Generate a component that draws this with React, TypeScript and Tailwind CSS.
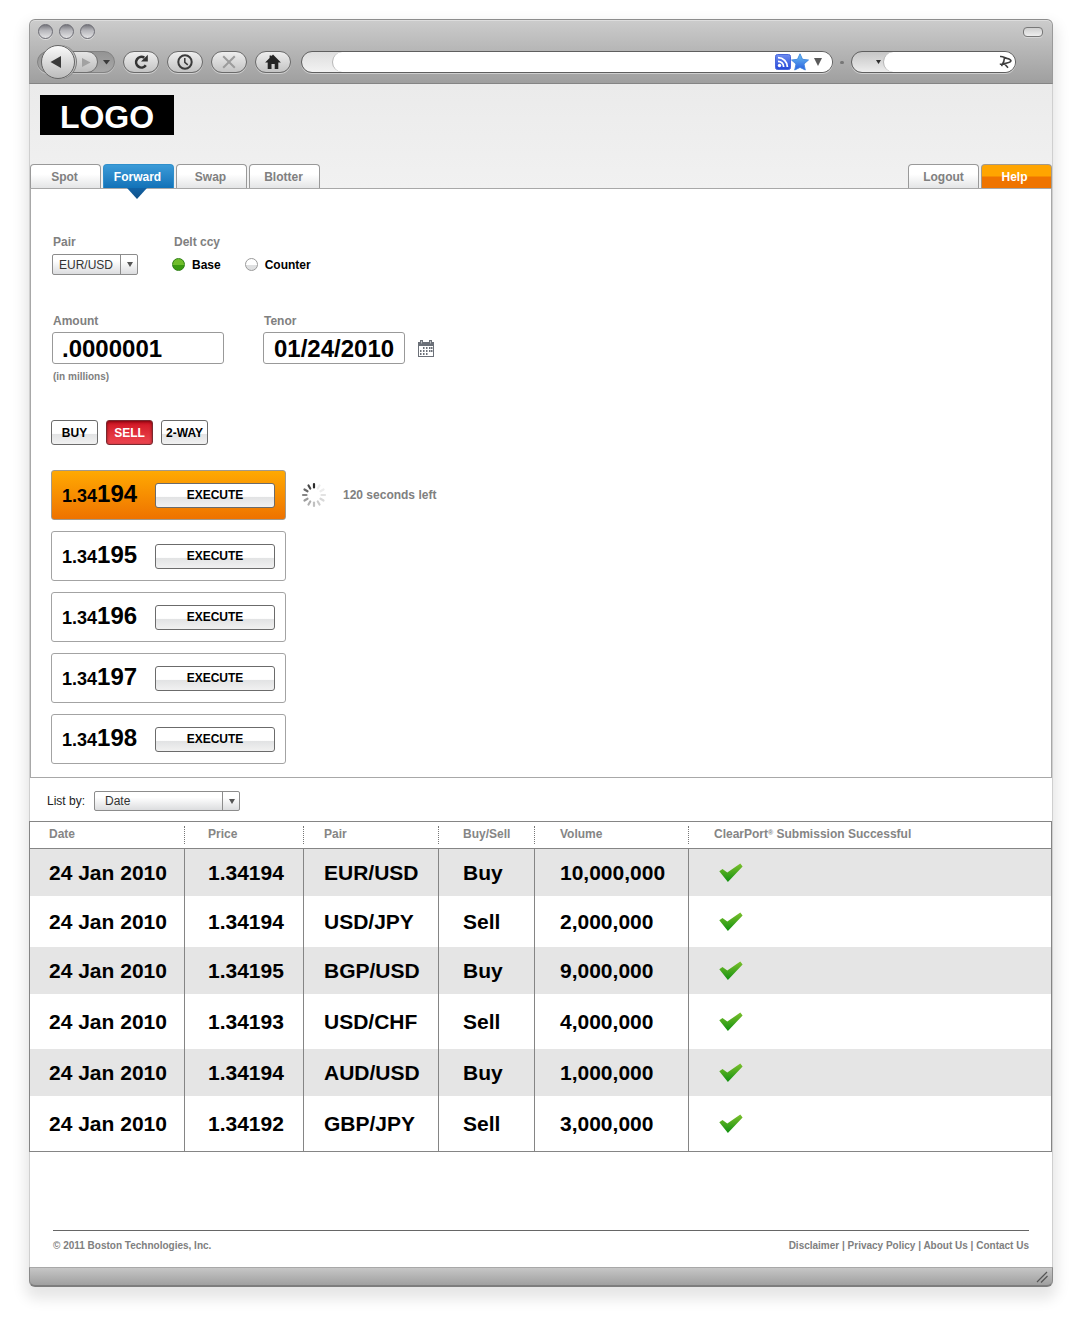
import React, { useState } from "react";

const PILL =
  "flex h-[22px] w-9 shrink-0 items-center justify-center rounded-full border border-[#6a6a6a] bg-linear-to-b from-[#eeeeee] to-[#c4c4c4] shadow-[0_1px_0_#cfcfcf]";

const GLOSS =
  "border-[#6b6b6b] bg-[linear-gradient(#ffffff_0%,#ffffff_54%,#e2e3e4_58%,#f1f1f1_100%)] text-black";

function TrafficLight({ label }: { label: string }) {
  return (
    <button
      aria-label={label}
      className="size-[15px] rounded-full border border-[#6c6c74] bg-[linear-gradient(#77777d_0%,#b4b4b9_40%,#e4e4e6_100%)] shadow-[0_1px_0_#dedede]"
    />
  );
}

function BrowserBar() {
  return (
    <header className="rounded-t-md border border-b-[#858585] border-x-[#9a9a9a] border-t-[#8d8d8d] bg-linear-to-b from-[#cccccc] to-[#9f9f9f] shadow-[inset_0_1px_0_#dddddd]">
      <div className="flex justify-between pt-1 pr-[9px] pl-2">
        <div className="flex gap-1.5">
          <TrafficLight label="Close" />
          <TrafficLight label="Minimize" />
          <TrafficLight label="Zoom" />
        </div>
        <button
          aria-label="Toggle toolbar"
          className="mt-[3px] h-2.5 w-5 rounded-sm border border-[#777777] bg-linear-to-b from-[#cfcfcf] to-[#eeeeee] shadow-[0_1px_0_#d6d6d6]"
        />
      </div>
      <div className="mt-1.5 flex items-center pr-9 pb-1 pl-[7px]">
        <div className="relative flex h-[34px] w-[78px] shrink-0 items-center">
          <span className="absolute inset-x-0 top-1.5 h-[22px] rounded-full border border-[#828282] bg-linear-to-b from-[#949494] to-[#a8a8a8] shadow-[0_1px_0_#c4c4c4]" />
          <button
            aria-label="Back"
            className="relative z-10 ml-1 flex size-[34px] shrink-0 items-center justify-center rounded-full border border-[#666666] bg-linear-to-b from-[#fafafa] to-[#bcbcbc] shadow-[1px_0_0_#c9c9c9,2px_0_0_#7c7c7c]"
          >
            <svg viewBox="0 0 12 12" className="mr-1 size-3 fill-[#3a3a3a]">
              <path d="M11 0V12L0.5 6Z" />
            </svg>
          </button>
          <button
            aria-label="Forward"
            className="relative -ml-1.5 flex h-[22px] w-[29px] shrink-0 items-center justify-end rounded-r-full border border-[#6f6f6f] bg-linear-to-b from-[#e6e6e6] to-[#bdbdbd] pr-1.5"
          >
            <svg viewBox="0 0 10 10" className="size-[9px] fill-[#a2a2a2]">
              <path d="M0 0V10L9.500 5Z" />
            </svg>
          </button>
          <button aria-label="History list" className="relative flex flex-1 justify-center">
            <svg viewBox="0 0 7 5" className="h-[5px] w-[7px] fill-[#3a3a3a]">
              <path d="M0 0H7L3.500 4.500Z" />
            </svg>
          </button>
        </div>
        <div className="ml-2 flex shrink-0 gap-2">
          <button aria-label="Reload" className={PILL}>
            <svg viewBox="0 0 16 16" className="size-4 fill-none stroke-[#333333] stroke-[2.600]">
              <path d="M12.800 11.200A5.300 5.300 0 1 1 11.300 3.700" />
              <path d="M14.800 0.800V7.600H8Z" className="fill-[#333333] stroke-none" />
            </svg>
          </button>
          <button aria-label="History" className={PILL}>
            <svg viewBox="0 0 16 16" className="size-4 fill-none stroke-[#3a3a3a] stroke-2">
              <circle cx="8" cy="8" r="6.700" />
              <path d="M7.800 4V8.300L10.800 10.800" className="stroke-[1.5]" />
            </svg>
          </button>
          <button aria-label="Stop" className={PILL}>
            <svg viewBox="0 0 16 16" className="size-4 fill-none stroke-[#9c9c9c] stroke-2">
              <path d="M2.200 2.200L13.800 13.800M13.800 2.200L2.200 13.800" />
            </svg>
          </button>
          <button aria-label="Home" className={PILL}>
            <svg viewBox="0 0 16 16" className="size-4 fill-[#252525]">
              <path d="M8 0.500L15.900 8.600H13.300V15H9.700V10H6.500V15H2.700V8.600H0.100L4.600 4V1.500H6.400V2.200Z" />
            </svg>
          </button>
        </div>
        <div className="ml-2.5 flex h-[22px] min-w-0 flex-1 items-center overflow-hidden rounded-full border border-[#5f5f5f] bg-linear-to-b from-[#dedede] to-[#f2f2f2] pl-[30px] shadow-[0_1px_0_#cfcfcf]">
          <div className="flex h-full min-w-0 flex-1 items-center rounded-l-full border-l border-[#b5b5b5] bg-white pr-2.5">
            <input aria-label="Address" className="min-w-0 flex-1 px-3 text-xs outline-none" />
            <svg viewBox="0 0 16 16" className="size-4 shrink-0">
              <defs>
                <linearGradient id="feed" x1="0" y1="0" x2="0" y2="1">
                  <stop offset="0" stopColor="#6f8df0" />
                  <stop offset="1" stopColor="#2547d8" />
                </linearGradient>
              </defs>
              <rect x="0.500" y="0.500" width="15" height="15" rx="2" fill="url(#feed)" stroke="#4a68dc" />
              <circle cx="4.500" cy="11.500" r="1.700" fill="#fff" />
              <path d="M3 7.300A5.700 5.700 0 0 1 8.700 13M3 3.600A9.400 9.400 0 0 1 12.400 13" fill="none" stroke="#fff" strokeWidth="1.800" />
            </svg>
            <svg viewBox="0 0 18 18" className="size-[18px] shrink-0">
              <defs>
                <linearGradient id="star" x1="0" y1="0" x2="0" y2="1">
                  <stop offset="0" stopColor="#6cc3f2" />
                  <stop offset="1" stopColor="#2a5fe0" />
                </linearGradient>
              </defs>
              <path
                d="M9 0.800L11.500 6.300L17.500 7L13 11L14.300 17L9 14.400L3.700 17L5 11L0.500 7L6.500 6.300Z"
                fill="url(#star)"
                stroke="#3f86dc"
                strokeWidth="0.900"
                strokeLinejoin="round"
              />
            </svg>
            <svg viewBox="0 0 8 8" className="ml-[5px] size-2 shrink-0 fill-[#5a5a5a]">
              <path d="M0 0H8L4 8Z" />
            </svg>
          </div>
        </div>
        <span className="mx-[7px] h-[3px] w-1 shrink-0 rounded-full bg-[#777777]" />
        <div className="flex h-[22px] w-[165px] shrink-0 items-center overflow-hidden rounded-full border border-[#5f5f5f] bg-linear-to-b from-[#c6c6c6] to-[#ededed] shadow-[0_1px_0_#cfcfcf]">
          <button aria-label="Search engine" className="flex w-[31px] shrink-0 justify-end pr-0.5">
            <svg viewBox="0 0 5 4" className="h-1 w-[5px] fill-[#2f2f2f]">
              <path d="M0 0H5L2.500 4Z" />
            </svg>
          </button>
          <div className="flex h-full min-w-0 flex-1 items-center rounded-l-full border-l border-[#b5b5b5] bg-white pr-[3px]">
            <input aria-label="Search" className="min-w-0 flex-1 px-3 text-xs outline-none" />
            <svg viewBox="0 0 13 14" className="h-3.5 w-[13px] shrink-0 fill-none stroke-[#3f3f3f] stroke-[1.600]">
              <path d="M1 1.500C4 1 5.500 2.800 8 3.400C11 4 12.800 5.400 11.500 6.600C9.500 8.300 5 8.800 0.800 9.300M5.500 2.500C5.500 6 4.500 8 2.500 11.200M5 8.300L9 12.800" />
            </svg>
          </div>
        </div>
      </div>
    </header>
  );
}

const TAB =
  "flex h-6 w-[71px] items-center justify-center rounded-t border border-b-0 text-xs font-bold";

function Tab({ label, active, onSelect }: { label: string; active?: boolean; onSelect?: () => void }) {
  return (
    <button
      role="tab"
      aria-selected={!!active}
      onClick={onSelect}
      className={
        active
          ? `${TAB} relative border-[#2f8fcb] bg-linear-to-b from-[#3b9bd8] to-[#1172b8] pr-0.5 text-white`
          : `${TAB} border-[#999999] bg-linear-to-b from-white from-40% to-[#e4e5e6] pr-0.5 text-[#808080]`
      }
    >
      {label}
      {active && (
        <svg viewBox="0 0 20 11" className="absolute top-[23px] left-[23px] h-[11px] w-5">
          <defs>
            <linearGradient id="pointer" x1="0" y1="0" x2="0" y2="1">
              <stop offset="0" stopColor="#1263a6" />
              <stop offset="1" stopColor="#0f4f86" />
            </linearGradient>
          </defs>
          <path d="M0 0H20L10 11Z" fill="url(#pointer)" />
        </svg>
      )}
    </button>
  );
}

function Dropdown({ id, options, size, pad }: { id: string; options: string[]; size: string; pad: string }) {
  return (
    <div className={`relative ${size}`}>
      <select
        id={id}
        className={`block size-full appearance-none rounded-xs border border-[#8c8c8c] bg-linear-to-b from-white from-30% to-[#dcdddf] text-xs text-[#333333] ${pad}`}
      >
        {options.map((o) => (
          <option key={o}>{o}</option>
        ))}
      </select>
      <span className="pointer-events-none absolute inset-y-0 right-0 flex w-[18px] items-center justify-center border-l border-[#8c8c8c]">
        <svg viewBox="0 0 6 5" className="h-[5px] w-1.5 fill-[#555555]">
          <path d="M0 0H6L3 5Z" />
        </svg>
      </span>
    </div>
  );
}

function Radio({ label, checked, onChange }: { label: string; checked: boolean; onChange: () => void }) {
  return (
    <label className="flex items-center gap-[7px] text-xs font-bold text-black">
      <input
        type="radio"
        name="delt"
        checked={checked}
        onChange={onChange}
        className="size-[13px] appearance-none rounded-full border border-[#9a9a9a] bg-[linear-gradient(#ffffff_50%,#dfe0e1_54%)] checked:border-[#2c7f12] checked:bg-[linear-gradient(#6fbd2a_50%,#3a9a10_54%)]"
      />
      {label}
    </label>
  );
}

function CalendarIcon() {
  return (
    <svg viewBox="0 0 16 17" className="h-[17px] w-4">
      <path
        fillRule="evenodd"
        fill="#6b7078"
        d="M0 2H2V0H5V2H11V0H14V2H16V17H0ZM1 6V16H15V6Z"
      />
      <path d="M3.500 1V3.500M12.500 1V3.500" stroke="#b9bcc0" strokeWidth="1" />
      <g fill="#6b7078">
        {[5, 8, 11, 13].map((x) => (
          <rect key={x} x={x} y="7" width="1.500" height="2" />
        ))}
        {[2, 5, 8, 11, 13].map((x) => (
          <rect key={x} x={x} y="10" width="1.500" height="2" />
        ))}
        {[2, 5, 8].map((x) => (
          <rect key={x} x={x} y="13" width="1.500" height="2" />
        ))}
      </g>
    </svg>
  );
}

const SPOKES = ["#ececec", "#ececec", "#e2e2e2", "#d8d8d8", "#cbcbcb", "#c0c0c0", "#b0b0b0", "#9c9c9c", "#868686", "#6a6a6a", "#474747", "#2a2a2a"];

function Spinner() {
  return (
    <svg viewBox="0 0 26 26" className="size-[26px]" role="img" aria-label="Waiting">
      {SPOKES.map((color, i) => (
        <line
          key={i}
          x1="13"
          y1="5.500"
          x2="13"
          y2="2"
          stroke={color}
          strokeWidth="2.200"
          strokeLinecap="round"
          transform={`rotate(${(i + 1) * 30} 13 13)`}
        />
      ))}
    </svg>
  );
}

function Quote({ pips, active }: { pips: string; active?: boolean }) {
  return (
    <div
      className={
        active
          ? "flex h-[50px] w-[235px] items-center justify-between rounded-[3px] border border-[#a39a8c] bg-linear-to-b from-[#ffa902] to-[#ee7200] px-2.5"
          : "flex h-[50px] w-[235px] items-center justify-between rounded-[3px] border border-[#a3a3a3] bg-white px-2.5"
      }
    >
      <span className="text-lg leading-8 font-bold text-black">
        1.34<span className="text-2xl leading-8">{pips}</span>
      </span>
      <button className={`h-[25px] w-[120px] rounded-[3px] border text-xs font-bold ${GLOSS}`}>EXECUTE</button>
    </div>
  );
}

function Check() {
  return (
    <svg viewBox="0 0 24 20" className="ml-[5px] h-5 w-6" role="img" aria-label="Successful">
      <defs>
        <linearGradient id="check" x1="0" y1="0" x2="0" y2="1">
          <stop offset="0" stopColor="#7cc02c" />
          <stop offset="1" stopColor="#109010" />
        </linearGradient>
      </defs>
      <path d="M0.300 8.300L3.500 6L8.300 9.600L21.300 0.600L23.600 3.500L8.900 19Z" fill="url(#check)" />
    </svg>
  );
}

const COLUMNS = [
  { name: "Date", width: "w-[155px]", pad: "pl-[19px]" },
  { name: "Price", width: "w-[119px]", pad: "pl-[23px]" },
  { name: "Pair", width: "w-[135px]", pad: "pl-5" },
  { name: "Buy/Sell", width: "w-24", pad: "pl-6" },
  { name: "Volume", width: "w-[154px]", pad: "pl-[25px]" },
];

const TRADES = [
  ["24 Jan 2010", "1.34194", "EUR/USD", "Buy", "10,000,000"],
  ["24 Jan 2010", "1.34194", "USD/JPY", "Sell", "2,000,000"],
  ["24 Jan 2010", "1.34195", "BGP/USD", "Buy", "9,000,000"],
  ["24 Jan 2010", "1.34193", "USD/CHF", "Sell", "4,000,000"],
  ["24 Jan 2010", "1.34194", "AUD/USD", "Buy", "1,000,000"],
  ["24 Jan 2010", "1.34192", "GBP/JPY", "Sell", "3,000,000"],
];

const ROW_STYLES = [
  "h-[47px] bg-[#e5e5e5]",
  "h-[51px] bg-white",
  "h-[47px] bg-[#e5e5e5]",
  "h-[55px] bg-white",
  "h-[47px] bg-[#e5e5e5]",
  "h-[55px] bg-white",
];

function Blotter() {
  return (
    <div className="-ml-px border border-[#858585]">
      <table className="w-full table-fixed border-separate border-spacing-0 text-left">
        <thead>
          <tr className="h-[27px] text-xs text-[#858585]">
            {COLUMNS.map((c) => (
              <th key={c.name} className={`border-b border-[#858585] p-0 ${c.width}`}>
                <div className={`h-[18px] border-r border-dotted border-[#777777] leading-4 ${c.pad}`}>{c.name}</div>
              </th>
            ))}
            <th className="border-b border-[#858585] p-0">
              <div className="h-[18px] pl-[25px] leading-4">
                ClearPort<sup className="text-[7px]">®</sup> Submission Successful
              </div>
            </th>
          </tr>
        </thead>
        <tbody className="text-[21px] leading-6 font-bold text-black">
          {TRADES.map((row, i) => (
            <tr key={i} className={ROW_STYLES[i]}>
              {row.map((cell, j) => (
                <td key={j} className={`border-r border-[#858585] py-0 pr-0 ${COLUMNS[j].pad}`}>
                  {cell}
                </td>
              ))}
              <td className="py-0 pr-0 pl-[25px]">
                <Check />
              </td>
            </tr>
          ))}
        </tbody>
      </table>
    </div>
  );
}

const LABEL = "block pl-px text-xs leading-4 font-bold text-[#808080]";
const FIELD = "h-8 rounded-[3px] border border-[#999999] bg-white pt-0.5 text-2xl font-bold text-black outline-none";
const SIDE = "h-[25px] w-[47px] rounded-[3px] border text-xs font-bold";

export default function App() {
  const [tab, setTab] = useState("Forward");
  const [delt, setDelt] = useState("Base");
  const [side, setSide] = useState("SELL");
  return (
    <div className="bg-white pt-[19px] pr-[22px] pb-[54px] pl-[29px] font-['Liberation_Sans',Arial,sans-serif]">
      <div className="rounded-t-md rounded-b-lg shadow-[0_8px_14px_4px_rgba(0,0,0,0.1)]">
        <BrowserBar />
        <main className="border-x border-[#cfcfcf] bg-white">
          <div className="bg-linear-to-b from-[#ebebeb] to-[#f1f1f1] pt-[11px]">
            <h1 className="ml-2.5 flex h-10 w-[134px] items-center justify-center bg-black pt-1 text-[32px] font-bold text-white">
              LOGO
            </h1>
            <div className="mt-[29px] flex justify-between">
              <div role="tablist" className="flex gap-0.5">
                {["Spot", "Forward", "Swap", "Blotter"].map((t) => (
                  <Tab key={t} label={t} active={tab === t} onSelect={() => setTab(t)} />
                ))}
              </div>
              <div className="flex gap-0.5">
                <button className={`${TAB} border-[#999999] bg-linear-to-b from-white from-40% to-[#e4e5e6] text-[#808080]`}>
                  Logout
                </button>
                <button className={`${TAB} border-[#a39a8c] bg-[linear-gradient(#ffa500_48%,#ef7400_52%)] pr-1 text-white`}>
                  Help
                </button>
              </div>
            </div>
          </div>

          <section className="border border-[#a8a8a8] bg-white pt-[45px] pb-[13px] pl-5">
            <div className="ml-px flex">
              <div className="w-[120px]">
                <label htmlFor="pair" className={LABEL}>Pair</label>
                <div className="mt-1">
                  <Dropdown id="pair" options={["EUR/USD", "USD/JPY", "AUD/USD"]} size="h-[21px] w-[86px]" pad="pl-1.5" />
                </div>
              </div>
              <fieldset>
                <legend className={`${LABEL} ml-px`}>Delt ccy</legend>
                <div className="mt-1 flex h-[21px] items-center gap-6">
                  <Radio label="Base" checked={delt === "Base"} onChange={() => setDelt("Base")} />
                  <Radio label="Counter" checked={delt === "Counter"} onChange={() => setDelt("Counter")} />
                </div>
              </fieldset>
            </div>

            <div className="mt-[38px] ml-px flex">
              <div className="w-[211px]">
                <label htmlFor="amount" className={LABEL}>Amount</label>
                <input id="amount" defaultValue=".0000001" className={`${FIELD} mt-[3px] block w-[172px] px-[9px]`} />
                <p className="mt-[5px] pl-px text-[10px] leading-4 font-bold text-[#808080]">(in millions)</p>
              </div>
              <div>
                <label htmlFor="tenor" className={LABEL}>Tenor</label>
                <div className="mt-[3px] flex items-center gap-[13px]">
                  <input id="tenor" defaultValue="01/24/2010" className={`${FIELD} w-[142px] px-2.5`} />
                  <button aria-label="Pick a date"><CalendarIcon /></button>
                </div>
              </div>
            </div>

            <div className="mt-[35px] flex gap-2">
              {["BUY", "SELL", "2-WAY"].map((s) => (
                <button
                  key={s}
                  onClick={() => setSide(s)}
                  className={
                    side === s
                      ? `${SIDE} border-[#7a2a30] bg-linear-to-b from-[#cf0d20] to-[#ee4550] text-white shadow-[inset_0_1px_3px_rgba(60,0,0,0.6)]`
                      : `${SIDE} ${GLOSS}`
                  }
                >
                  {s}
                </button>
              ))}
            </div>

            <div className="mt-[25px] flex flex-col gap-[11px]">
              <div className="flex items-center">
                <Quote pips="194" active />
                <div className="ml-[15px] flex items-center gap-4 text-xs font-bold text-[#808080]">
                  <Spinner />
                  120 seconds left
                </div>
              </div>
              <Quote pips="195" />
              <Quote pips="196" />
              <Quote pips="197" />
              <Quote pips="198" />
            </div>
          </section>

          <div className="flex items-center gap-[9px] pt-[13px] pb-2.5 pl-[17px]">
            <label htmlFor="listby" className="text-xs text-[#222222]">List by:</label>
            <Dropdown id="listby" options={["Date", "Price", "Pair", "Volume"]} size="h-5 w-[146px]" pad="pl-2.5" />
          </div>
          <Blotter />

          <footer className="mx-[23px] mt-[78px] flex justify-between border-t border-[#666666] pt-[7px] pb-[13px] text-[10px] leading-4 font-bold text-[#808080]">
            <p>© 2011 Boston Technologies, Inc.</p>
            <nav>
              <a href="#disclaimer">Disclaimer</a> | <a href="#privacy">Privacy Policy</a> | <a href="#about">About Us</a> |{" "}
              <a href="#contact">Contact Us</a>
            </nav>
          </footer>
        </main>
        <div className="flex h-5 items-center justify-end rounded-b-md border border-b-2 border-[#8a8a8a] border-t-[#a8a8a8] border-b-[#7d7d7d] bg-linear-to-b from-[#c6c6c6] to-[#a0a0a0] pr-1">
          <svg viewBox="0 0 12 12" className="size-3 fill-none stroke-[#555555] stroke-[1.2]">
            <path d="M1 11L11 1M5 11.500L11.500 5" />
          </svg>
        </div>
      </div>
    </div>
  );
}
